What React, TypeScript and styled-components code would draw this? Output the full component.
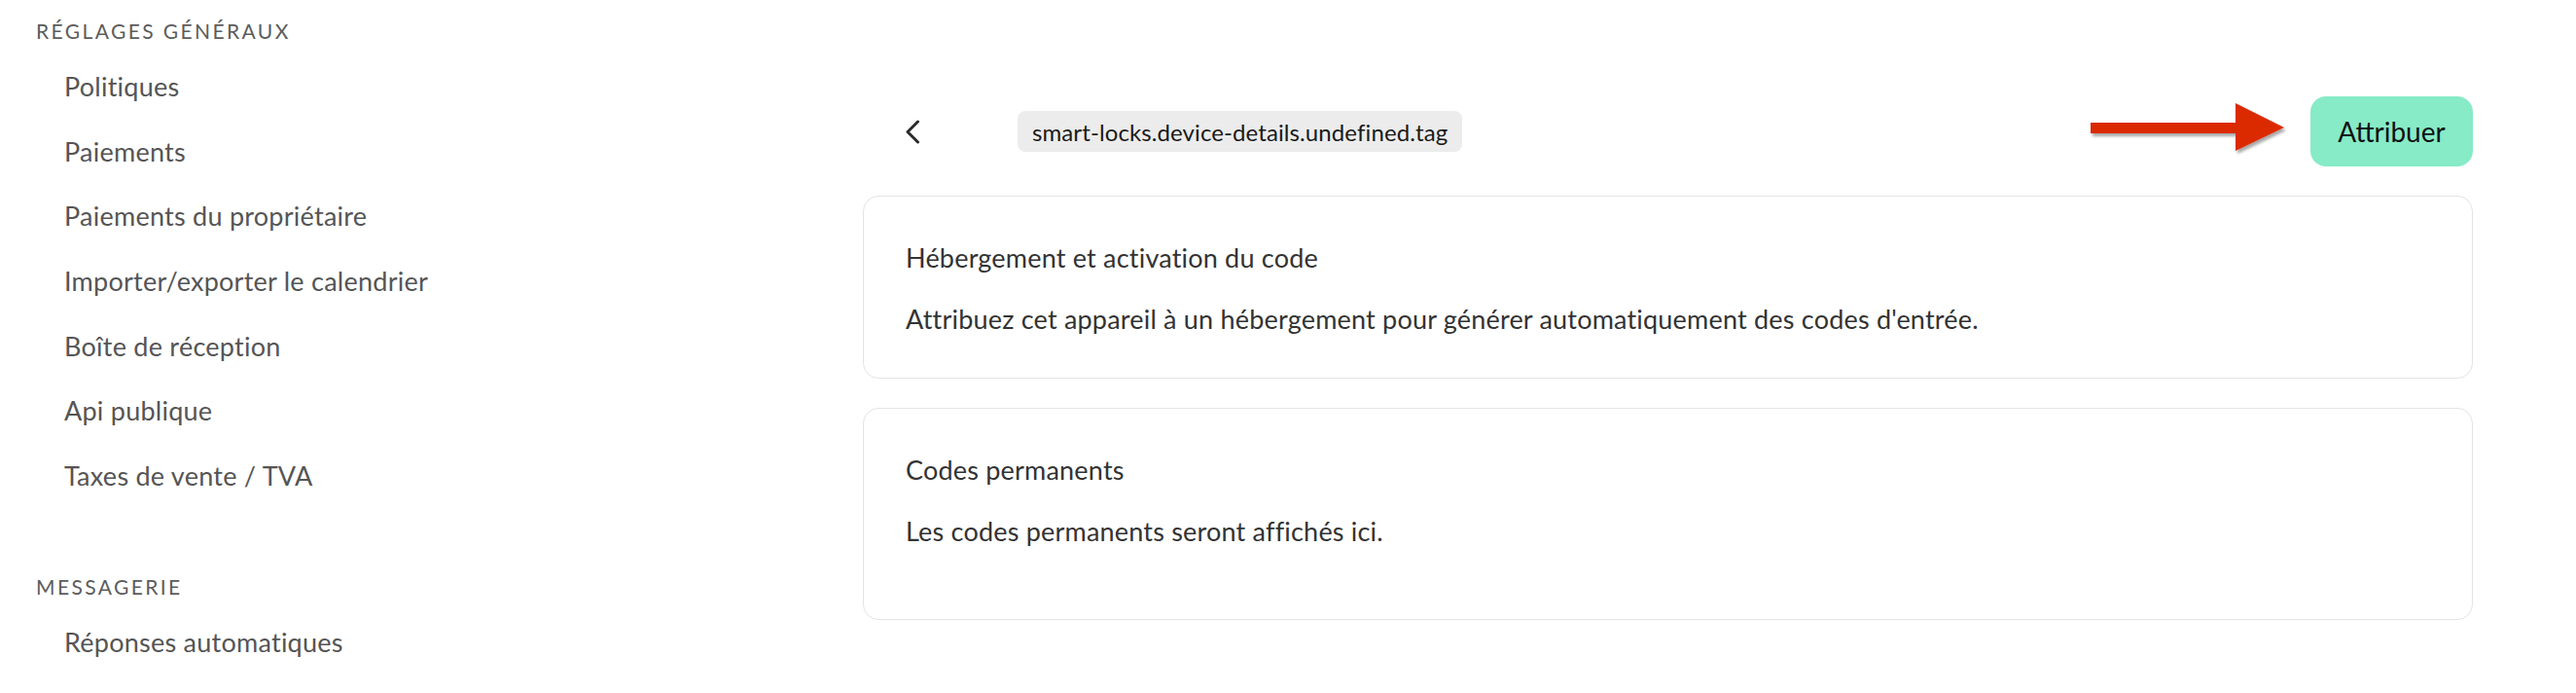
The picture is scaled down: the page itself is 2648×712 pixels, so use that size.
import React from "react";
import styled, { createGlobalStyle } from "styled-components";

const GlobalStyle = createGlobalStyle`
  html, body {
    margin: 0;
    padding: 0;
    background: #ffffff;
  }
  body {
    font-family: "Lato", "Noto Sans", sans-serif;
    -webkit-font-smoothing: antialiased;
  }
  * { box-sizing: border-box; }
`;

const Page = styled.div`
  display: grid;
  grid-template-columns: 560px 1fr;
  width: 2648px;
  height: 712px;
`;

const Sidebar = styled.nav`
  display: flex;
  flex-direction: column;
  gap: 65px;
  padding: 17px 0 0 37px;
`;

const Section = styled.section`
  display: flex;
  flex-direction: column;
`;

const SectionTitle = styled.div`
  height: 30px;
  line-height: 30px;
  margin-bottom: 9px;
  font-size: 21px;
  letter-spacing: 2.4px;
  color: #5c5c5c;
  text-transform: uppercase;
`;

const NavItem = styled.a`
  display: block;
  height: 66.67px;
  line-height: 66.67px;
  padding-left: 29px;
  font-size: 27px;
  letter-spacing: 0.25px;
  color: #555555;
  text-decoration: none;
  white-space: nowrap;
`;

const Main = styled.main`
  display: flex;
  flex-direction: column;
  padding: 99px 106px 0 327px;
`;

const Header = styled.header`
  display: flex;
  align-items: center;
  height: 72px;
  margin-bottom: 30px;
  padding-left: 42px;
`;

const BackButton = styled.button`
  display: flex;
  align-items: center;
  justify-content: center;
  width: 18px;
  height: 26px;
  padding: 0;
  border: 0;
  background: transparent;
  cursor: pointer;
`;

const Tag = styled.span`
  display: inline-flex;
  align-items: center;
  height: 42px;
  margin-left: 99px;
  padding: 0 15px;
  border-radius: 8px;
  background: #ececec;
  font-size: 24px;
  letter-spacing: 0.1px;
  color: #1a1a1a;
  white-space: nowrap;
`;

const Actions = styled.div`
  display: flex;
  align-items: center;
  gap: 18px;
  margin-left: auto;
`;

const AssignButton = styled.button`
  width: 167px;
  height: 72px;
  border: 0;
  border-radius: 16px;
  background: #86ebc6;
  font-family: "Lato", "Noto Sans", sans-serif;
  font-size: 28px;
  color: #111111;
  cursor: pointer;
`;

const Cards = styled.div`
  display: flex;
  flex-direction: column;
  gap: 30px;
`;

const Card = styled.section<{ $extra?: number }>`
  display: flex;
  flex-direction: column;
  gap: 23px;
  padding: 43px 43px ${(p) => 40 + (p.$extra ?? 0)}px;
  border: 1px solid #e4e4e4;
  border-radius: 16px;
  background: #ffffff;
`;

const CardText = styled.p`
  margin: 0;
  height: 40px;
  line-height: 40px;
  font-size: 27px;
  letter-spacing: 0.2px;
  color: #333333;
  white-space: nowrap;
`;

const ChevronLeft = () => (
  <svg width="16" height="25" viewBox="0 0 16 25" fill="none">
    <polyline
      points="13.5,2 3,12.5 13.5,23"
      stroke="#2b2b2b"
      strokeWidth="3"
      strokeLinecap="round"
      strokeLinejoin="round"
    />
  </svg>
);

const RedArrow = () => (
  <svg width="208" height="58" viewBox="0 0 208 58">
    <defs>
      <filter id="arrowShadow" x="-10%" y="-20%" width="130%" height="150%">
        <feDropShadow dx="2" dy="3" stdDeviation="1.6" floodColor="#000" floodOpacity="0.35" />
      </filter>
    </defs>
    <g filter="url(#arrowShadow)">
      <rect x="0" y="20" width="151" height="11" fill="#dc2b04" />
      <polygon points="149,0 199,25 149,49" fill="#dc2b04" />
    </g>
  </svg>
);

const generalItems = [
  "Politiques",
  "Paiements",
  "Paiements du propriétaire",
  "Importer/exporter le calendrier",
  "Boîte de réception",
  "Api publique",
  "Taxes de vente / TVA",
];

export default function App() {
  return (
    <>
      <GlobalStyle />
      <Page>
        <Sidebar>
          <Section>
            <SectionTitle>Réglages généraux</SectionTitle>
            {generalItems.map((item) => (
              <NavItem key={item}>{item}</NavItem>
            ))}
          </Section>
          <Section>
            <SectionTitle>Messagerie</SectionTitle>
            <NavItem>Réponses automatiques</NavItem>
          </Section>
        </Sidebar>
        <Main>
          <Header>
            <BackButton aria-label="Retour">
              <ChevronLeft />
            </BackButton>
            <Tag>smart-locks.device-details.undefined.tag</Tag>
            <Actions>
              <RedArrow />
              <AssignButton>Attribuer</AssignButton>
            </Actions>
          </Header>
          <Cards>
            <Card>
              <CardText>Hébergement et activation du code</CardText>
              <CardText>
                Attribuez cet appareil à un hébergement pour générer automatiquement des codes d'entrée.
              </CardText>
            </Card>
            <Card $extra={30}>
              <CardText>Codes permanents</CardText>
              <CardText>Les codes permanents seront affichés ici.</CardText>
            </Card>
          </Cards>
        </Main>
      </Page>
    </>
  );
}
